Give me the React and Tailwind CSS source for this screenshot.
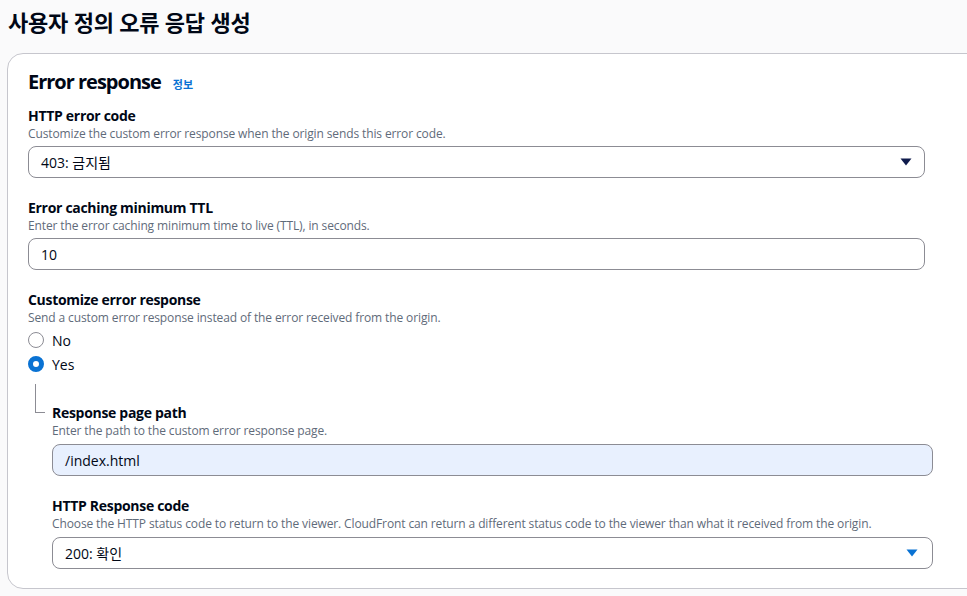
import React from 'react';

const font = { fontFamily: '"Open Sans", "Noto Sans CJK KR", sans-serif' };

function Caret({ className }) {
    return (
        <svg width="12" height="8" viewBox="0 0 12 8" className={className}>
            <path d="M0.5 0.5 L11.5 0.5 L6 7.5 Z" fill="currentColor" />
        </svg>
    );
}

function Field({ label, desc, children, className }) {
    return (
        <div className={className}>
            <div className="text-[14px] leading-[20px] font-bold text-[#000716] tracking-[-0.3px]">{label}</div>
            <div className="text-[12px] leading-[16px] text-[#5f6b7a] tracking-[-0.12px]">{desc}</div>
            {children}
        </div>
    );
}

function Select({ value, caretColor, className }) {
    return (
        <div className={"flex items-center justify-between h-[32px] border border-[#8c8c94] rounded-lg bg-white pl-[12px] pr-[12px] " + className}>
            <span className="text-[14px] text-[#000716]">{value}</span>
            <Caret className={caretColor} />
        </div>
    );
}

export default function App() {
    return (
        <div className="w-[967px] h-[596px] overflow-hidden bg-[#fafafb]" style={font}>
            <h1 className="pl-[8px] pt-[7px] text-[22px] leading-[30px] font-bold text-[#000716] tracking-[-0.2px]">사용자 정의 오류 응답 생성</h1>

            <div className="mt-[16px] ml-[7px] w-[990px] bg-white border border-[#c6c6cd] rounded-2xl pl-[20px] pt-[16px] pb-[19px]">
                <div className="flex items-baseline gap-[12px]">
                    <h2 className="text-[20px] leading-[24px] font-bold text-[#000716] tracking-[-1px]">Error response</h2>
                    <span className="text-[11px] font-bold text-[#0972d3]">정보</span>
                </div>

                <Field className="mt-[12px]" label="HTTP error code" desc="Customize the custom error response when the origin sends this error code.">
                    <Select value="403: 금지됨" caretColor="text-[#0f1b4c]" className="mt-[4px] w-[897px]" />
                </Field>

                <Field className="mt-[20px]" label="Error caching minimum TTL" desc="Enter the error caching minimum time to live (TTL), in seconds.">
                    <div className="mt-[4px] w-[897px] h-[32px] border border-[#8c8c94] rounded-lg flex items-center pl-[12px] text-[14px] text-[#000716]">10</div>
                </Field>

                <Field className="mt-[20px]" label="Customize error response" desc="Send a custom error response instead of the error received from the origin.">
                    <div className="mt-[4px] flex flex-col gap-[4px]">
                        <label className="flex items-center gap-[8px] h-[20px]">
                            <span className="w-[16px] h-[16px] rounded-full border-[1.5px] border-[#8c8c94] bg-white" />
                            <span className="text-[14px] text-[#000716]">No</span>
                        </label>
                        <label className="flex items-center gap-[8px] h-[20px]">
                            <span className="w-[16px] h-[16px] rounded-full border-[5px] border-[#0972d3] bg-white" />
                            <span className="text-[14px] text-[#000716]">Yes</span>
                        </label>
                    </div>
                </Field>

                <div className="flex">
                    <div className="w-[24px] shrink-0">
                        <div className="ml-[7px] mt-[10px] w-[10px] h-[29px] border-l border-b border-[#8c8c94]" />
                    </div>
                    <div>
                        <Field className="mt-[29px]" label="Response page path" desc="Enter the path to the custom error response page.">
                            <div className="mt-[5px] w-[881px] h-[32px] border border-[#8c8c94] rounded-lg bg-[#e8f0fe] flex items-center pl-[12px] text-[14px] text-[#000716]">/index.html</div>
                        </Field>
                        <Field className="mt-[20px]" label="HTTP Response code" desc="Choose the HTTP status code to return to the viewer. CloudFront can return a different status code to the viewer than what it received from the origin.">
                            <Select value="200: 확인" caretColor="text-[#0972d3]" className="mt-[5px] w-[881px] pr-[14px]" />
                        </Field>
                    </div>
                </div>
            </div>
        </div>
    );
}
